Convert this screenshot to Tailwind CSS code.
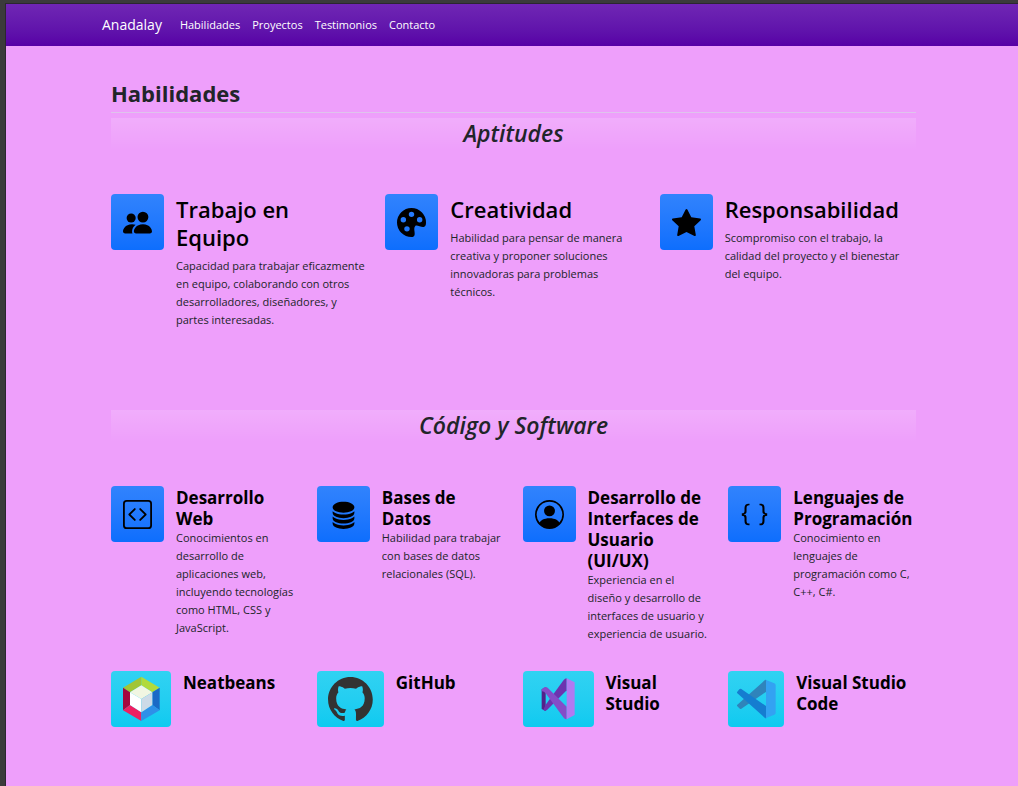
<!DOCTYPE html>
<html lang="es">
<head>
<meta charset="utf-8">
<meta name="viewport" content="width=device-width, initial-scale=1">
<title>Anadalay</title>
<script src="https://cdn.jsdelivr.net/npm/@tailwindcss/browser@4"></script>
</head>
<body class="bg-[#3b3b3b] pl-[5px] pt-[3px] font-['Open_Sans','Noto_Sans',sans-serif] text-[#212529]">
<div class="min-h-[calc(100vh-3px)] border-l border-t border-[#2c2630] bg-[#ee9ffb]">
  <header class="flex h-[42px] items-center bg-linear-to-b from-[#7026b4] to-[#5700a6] pl-24 text-white">
    <a href="#" class="text-sm">Anadalay</a>
    <nav class="ml-[18px] flex gap-3 text-[11px]">
      <a href="#habilidades">Habilidades</a>
      <a href="#proyectos">Proyectos</a>
      <a href="#testimonios">Testimonios</a>
      <a href="#contacto">Contacto</a>
    </nav>
  </header>
  <main id="habilidades" class="pl-[105px] pr-[102px] pt-8">
    <h1 class="border-b border-[#dfc3ec] pb-1 text-[22px] leading-[30px] font-bold">Habilidades</h1>
    <h2 class="mt-[5px] h-8 bg-linear-to-b from-white/15 to-white/0 text-center text-[23px] leading-[30px] font-semibold italic">Aptitudes</h2>
    <section class="mt-11 grid min-h-[216px] grid-cols-3 items-start gap-x-[18px]">
      <article class="flex items-start gap-3">
        <button type="button" aria-label="Trabajo en Equipo" class="flex h-14 w-[53px] shrink-0 items-center justify-center rounded bg-linear-to-b from-[#3183fd] to-[#0d6efd] text-black">
          <svg class="size-[29px]" viewBox="0 0 16 16" fill="currentColor"><path d="M7 14s-1 0-1-1 1-4 5-4 5 3 5 4-1 1-1 1H7zm4-6a3 3 0 1 0 0-6 3 3 0 0 0 0 6z"/><path d="M5.216 14A2.238 2.238 0 0 1 5 13c0-1.355.68-2.75 1.936-3.72A6.325 6.325 0 0 0 5 9c-4 0-5 3-5 4s1 1 1 1h4.216z"/><path d="M4.500 8a2.500 2.500 0 1 0 0-5 2.500 2.500 0 0 0 0 5z"/></svg>
        </button>
        <div class="pt-px"><h3 class="text-[22px] leading-7 font-semibold text-black">Trabajo en Equipo</h3>
        <p class="mt-1.5 text-[11px] leading-[18px]">Capacidad para trabajar eficazmente en equipo, colaborando con otros desarrolladores, diseñadores, y partes interesadas.</p></div>
      </article>
      <article class="flex items-start gap-3">
        <button type="button" aria-label="Creatividad" class="flex h-14 w-[53px] shrink-0 items-center justify-center rounded bg-linear-to-b from-[#3183fd] to-[#0d6efd] text-black">
          <svg class="size-[29px]" viewBox="0 0 16 16" fill="currentColor"><path d="M12.433 10.070C14.133 10.585 16 11.150 16 8a8 8 0 1 0-8 8c1.996 0 1.826-1.504 1.649-3.080-.124-1.101-.252-2.237.351-2.920.465-.527 1.420-.237 2.433.070zM8 5a1.500 1.500 0 1 1 0-3 1.500 1.500 0 0 1 0 3zm4.500 3a1.500 1.500 0 1 1 0-3 1.500 1.500 0 0 1 0 3zM5 6.500a1.500 1.500 0 1 1-3 0 1.500 1.500 0 0 1 3 0zm.5 6.500a1.500 1.500 0 1 1 0-3 1.500 1.500 0 0 1 0 3z"/></svg>
        </button>
        <div class="pt-px"><h3 class="text-[22px] leading-7 font-semibold text-black">Creatividad</h3>
        <p class="mt-1.5 text-[11px] leading-[18px]">Habilidad para pensar de manera creativa y proponer soluciones innovadoras para problemas técnicos.</p></div>
      </article>
      <article class="flex items-start gap-3">
        <button type="button" aria-label="Responsabilidad" class="flex h-14 w-[53px] shrink-0 items-center justify-center rounded bg-linear-to-b from-[#3183fd] to-[#0d6efd] text-black">
          <svg class="size-[29px]" viewBox="0 0 16 16" fill="currentColor"><path d="M3.612 15.443c-.386.198-.824-.149-.746-.592l.83-4.730L.173 6.765c-.329-.314-.158-.888.283-.950l4.898-.696L7.538.792c.197-.390.730-.390.927 0l2.184 4.327 4.898.696c.441.062.612.636.282.950l-3.522 3.356.830 4.730c.078.443-.360.790-.746.592L8 13.187l-4.389 2.256z"/></svg>
        </button>
        <div class="pt-px"><h3 class="text-[22px] leading-7 font-semibold text-black">Responsabilidad</h3>
        <p class="mt-1.5 text-[11px] leading-[18px]">Scompromiso con el trabajo, la calidad del proyecto y el bienestar del equipo.</p></div>
      </article>
    </section>

    <h2 class="h-8 bg-linear-to-b from-white/15 to-white/0 text-center text-[23px] leading-[30px] font-semibold italic">Código y Software</h2>
    <section class="mt-11 grid grid-cols-4 items-start gap-x-[18px] gap-y-7">
      <article class="flex items-start gap-3">
        <button type="button" aria-label="Desarrollo Web" class="flex h-14 w-[53px] shrink-0 items-center justify-center rounded bg-linear-to-b from-[#3183fd] to-[#0d6efd] text-black">
          <svg class="size-[29px]" viewBox="0 0 16 16" fill="currentColor"><path d="M14 1a1 1 0 0 1 1 1v12a1 1 0 0 1-1 1H2a1 1 0 0 1-1-1V2a1 1 0 0 1 1-1h12zM2 0a2 2 0 0 0-2 2v12a2 2 0 0 0 2 2h12a2 2 0 0 0 2-2V2a2 2 0 0 0-2-2H2z"/><path d="M6.854 4.646a.5.5 0 0 1 0 .708L4.207 8l2.647 2.646a.5.5 0 0 1-.708.708l-3-3a.5.5 0 0 1 0-.708l3-3a.5.5 0 0 1 .708 0zm2.292 0a.5.5 0 0 0 0 .708L11.793 8l-2.647 2.646a.5.5 0 0 0 .708.708l3-3a.5.5 0 0 0 0-.708l-3-3a.5.5 0 0 0-.708 0z"/></svg>
        </button>
        <div class="pt-px"><h3 class="text-[17px] leading-[21px] font-bold text-black">Desarrollo Web</h3>
        <p class="text-[11px] leading-[18px]">Conocimientos en desarrollo de aplicaciones web, incluyendo tecnologías como HTML, CSS y JavaScript.</p></div>
      </article>
      <article class="flex items-start gap-3">
        <button type="button" aria-label="Bases de Datos" class="flex h-14 w-[53px] shrink-0 items-center justify-center rounded bg-linear-to-b from-[#3183fd] to-[#0d6efd] text-black">
          <svg class="size-[29px]" viewBox="0 0 16 16" fill="currentColor"><path d="M3.904 1.777C4.978 1.289 6.427 1 8 1s3.022.289 4.096.777C13.125 2.245 14 2.993 14 4s-.875 1.755-1.904 2.223C11.022 6.711 9.573 7 8 7s-3.022-.289-4.096-.777C2.875 5.755 2 5.007 2 4s.875-1.755 1.904-2.223Z"/><path id="banda" d="M2 6.161V7c0 1.007.875 1.755 1.904 2.223C4.978 9.710 6.427 10 8 10s3.022-.289 4.096-.777C13.125 8.755 14 8.007 14 7v-.839c-.457.432-1.004.751-1.490.972C11.278 7.693 9.682 8 8 8s-3.278-.307-4.510-.867c-.486-.220-1.033-.540-1.490-.972Z"/><use href="#banda" y="3"/><use href="#banda" y="6"/></svg>
        </button>
        <div class="pt-px"><h3 class="text-[17px] leading-[21px] font-bold text-black">Bases de Datos</h3>
        <p class="text-[11px] leading-[18px]">Habilidad para trabajar con bases de datos relacionales (SQL).</p></div>
      </article>
      <article class="flex items-start gap-3">
        <button type="button" aria-label="Desarrollo de Interfaces de Usuario" class="flex h-14 w-[53px] shrink-0 items-center justify-center rounded bg-linear-to-b from-[#3183fd] to-[#0d6efd] text-black">
          <svg class="size-[29px]" viewBox="0 0 16 16" fill="currentColor"><path d="M11 6a3 3 0 1 1-6 0 3 3 0 0 1 6 0z"/><path fill-rule="evenodd" d="M0 8a8 8 0 1 1 16 0A8 8 0 0 1 0 8zm8-7a7 7 0 0 0-5.468 11.370C3.242 11.226 4.805 10 8 10s4.757 1.225 5.468 2.370A7 7 0 0 0 8 1z"/></svg>
        </button>
        <div class="pt-px"><h3 class="text-[17px] leading-[21px] font-bold text-black">Desarrollo de Interfaces de Usuario (UI/UX)</h3>
        <p class="text-[11px] leading-[18px]">Experiencia en el diseño y desarrollo de interfaces de usuario y experiencia de usuario.</p></div>
      </article>
      <article class="flex items-start gap-3">
        <button type="button" aria-label="Lenguajes de Programación" class="flex h-14 w-[53px] shrink-0 items-center justify-center rounded bg-linear-to-b from-[#3183fd] to-[#0d6efd] text-black">
          <svg class="size-[29px]" viewBox="0 0 16 16" fill="currentColor"><path d="M2.114 8.063V7.900c1.005-.102 1.497-.615 1.497-1.600V4.503c0-1.094.390-1.538 1.354-1.538h.273V2h-.376C3.250 2 2.490 2.759 2.490 4.352v1.524c0 1.094-.376 1.456-1.490 1.456v1.299c1.114 0 1.490.362 1.490 1.456v1.524c0 1.593.759 2.352 2.372 2.352h.376v-.964h-.273c-.964 0-1.354-.444-1.354-1.538V9.663c0-.984-.492-1.497-1.497-1.600zM13.886 7.900v.163c-1.005.103-1.497.616-1.497 1.600v1.798c0 1.094-.390 1.538-1.354 1.538h-.273v.964h.376c1.613 0 2.372-.759 2.372-2.352v-1.524c0-1.094.376-1.456 1.490-1.456V7.332c-1.114 0-1.490-.362-1.490-1.456V4.352C13.510 2.759 12.750 2 11.138 2h-.376v.964h.273c.964 0 1.354.444 1.354 1.538V6.300c0 .984.492 1.497 1.497 1.600z"/></svg>
        </button>
        <div class="pt-px"><h3 class="text-[17px] leading-[21px] font-bold text-black">Lenguajes de Programación</h3>
        <p class="text-[11px] leading-[18px]">Conocimiento en lenguajes de programación como C, C++, C#.</p></div>
      </article>

      <article class="flex items-start gap-3">
        <button type="button" aria-label="Neatbeans" class="shrink-0 rounded bg-linear-to-b from-[#31d2f2] to-[#0dcaf0]">
          <svg class="h-14 w-[60px]" viewBox="33 33 180 168">
            <path fill="#a1c535" d="M124 50 69 83l21 14 34-21z"/><path fill="#b1da3b" d="m124 50 55 33-22 14-33-21z"/>
            <path fill="#a5073e" d="m69 83 21 14v38l-21 16z"/><path fill="#ee1f61" d="m69 151 21-16 34 22v26z"/>
            <path fill="#1b6ac6" d="m179 83-22 14v38l22 16z"/><path fill="#2e90e8" d="m179 151-22-16-33 22v26z"/>
            <path fill="#f1f6e2" d="m124 76 33 21-33 20-34-20z"/><path fill="#fff" d="m90 97 34 20v40l-34-22z"/><path fill="#cddae7" d="m157 97-33 20v40l33-22z"/>
          </svg>
        </button>
        <h3 class="mt-px text-[17px] leading-[21px] font-bold text-black">Neatbeans</h3>
      </article>
      <article class="flex items-start gap-3">
        <button type="button" aria-label="GitHub" class="flex h-14 w-[67px] shrink-0 items-center justify-center rounded bg-linear-to-b from-[#31d2f2] to-[#0dcaf0] text-[#333]">
          <svg class="h-11 w-[45px]" viewBox="0 0 98 96" fill="currentColor"><path fill-rule="evenodd" d="M48.854 0C21.839 0 0 22 0 49.217c0 21.756 13.993 40.172 33.405 46.690 2.427.490 3.316-1.059 3.316-2.362 0-1.141-.080-5.052-.080-9.127-13.590 2.934-16.420-5.867-16.420-5.867-2.184-5.704-5.420-7.170-5.420-7.170-4.448-3.015.324-3.015.324-3.015 4.934.326 7.523 5.052 7.523 5.052 4.367 7.496 11.404 5.378 14.235 4.074.404-3.178 1.699-5.378 3.074-6.600-10.839-1.141-22.243-5.378-22.243-24.283 0-5.378 1.940-9.778 5.014-13.200-.485-1.222-2.184-6.275.486-13.038 0 0 4.125-1.304 13.426 5.052a46.970 46.970 0 0 1 12.214-1.630c4.125 0 8.330.571 12.213 1.630 9.302-6.356 13.427-5.052 13.427-5.052 2.670 6.763.970 11.816.485 13.038 3.155 3.422 5.015 7.822 5.015 13.200 0 18.905-11.404 23.060-22.324 24.283 1.780 1.548 3.316 4.481 3.316 9.126 0 6.600-.080 11.897-.080 13.526 0 1.304.890 2.853 3.316 2.364 19.412-6.520 33.405-24.935 33.405-46.691C97.707 22 75.788 0 48.854 0z"/></svg>
        </button>
        <h3 class="mt-px text-[17px] leading-[21px] font-bold text-black">GitHub</h3>
      </article>
      <article class="flex items-start gap-3">
        <button type="button" aria-label="Visual Studio" class="shrink-0 rounded bg-linear-to-b from-[#31d2f2] to-[#0dcaf0]">
          <svg class="h-14 w-[71px]" viewBox="37 33 213 168">
            <path fill="#52218a" d="m93 88 12-6v71l-12-6z"/>
            <path fill="#6c33af" d="M98 149q4 6 11 1l59-59V55q-5 0-9 5l-54 74z"/>
            <path fill="#854cc7" d="m93 88 8-6q5-3 10 1l57 57v38q-5 0-9-5l-54-73q-6-7-12-6z"/>
            <path fill="#b179f1" d="m168 55 24 12v98l-24 13z"/>
          </svg>
        </button>
        <h3 class="mt-px text-[17px] leading-[21px] font-bold text-black">Visual Studio</h3>
      </article>
      <article class="flex items-start gap-3">
        <button type="button" aria-label="Visual Studio Code" class="shrink-0 rounded bg-linear-to-b from-[#31d2f2] to-[#0dcaf0]">
          <svg class="size-14" viewBox="39 33 168 168">
            <path fill="#2f84bb" d="m67 134 82-73q3-3 5-1v35l-75 51q-3 2-6-1l-6-6q-2-3 0-5z"/>
            <path fill="#157dd0" d="m67 100 82 73q3 3 5 1v-35L79 87q-3-2-6 1l-6 7q-2 2 0 5z"/>
            <path fill="#33a2f2" d="m151 59 27 11q4 2 4 6v82q0 4-4 6l-27 11q2-1 2-5V64q0-4-2-5z"/>
          </svg>
        </button>
        <h3 class="mt-px text-[17px] leading-[21px] font-bold text-black">Visual Studio Code</h3>
      </article>
    </section>
  </main>
</div>
</body>
</html>
